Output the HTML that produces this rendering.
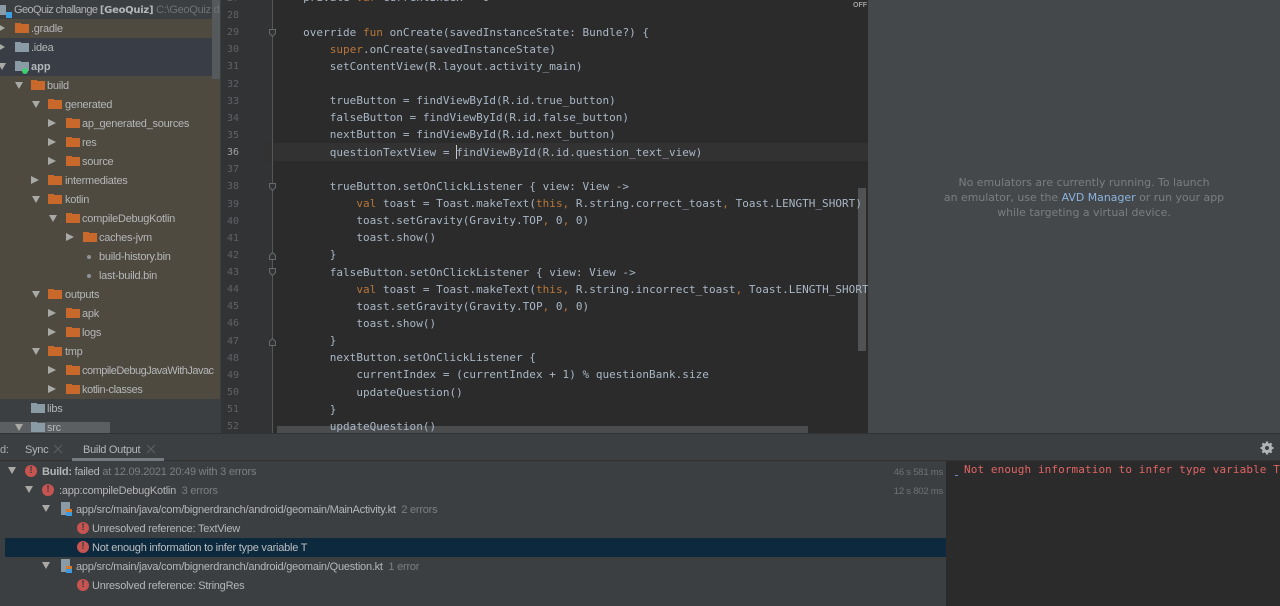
<!DOCTYPE html>
<html><head><meta charset="utf-8">
<style>
html,body{margin:0;padding:0;background:#3c3f41;}
#r{position:relative;width:1280px;height:606px;overflow:hidden;background:#3c3f41;font-family:"Liberation Sans",sans-serif;font-size:11px;letter-spacing:-.27px;color:#b4b6b8;filter:blur(.3px);}
#r div,#r span.a,#r svg{position:absolute;}
.t{white-space:nowrap;line-height:19px;height:19px;margin-top:1px;}
.bt{margin-top:2px;letter-spacing:-.23px;}
.g{color:#7c7f81;}
pre{margin:0;font-family:"DejaVu Sans Mono",monospace;letter-spacing:.03px;}
.o{color:#b8763a;}
.tri{width:0;height:0;}
.d{border-left:4px solid transparent;border-right:4px solid transparent;border-top:7px solid #a9aaa6;margin:1px 0 0 1px;}
.e{border-top:4px solid transparent;border-bottom:4px solid transparent;border-left:8px solid #a9aaa6;margin-top:1px;}
.f{width:14px;height:9px;background:#c8682a;margin-top:-1px;}
.f:before{content:"";position:absolute;left:0;top:-1px;width:6px;height:1px;background:#c8682a;}
.b:before{background:#8b9ba6;}
.b{background:#8b9ba6;}
.err{width:12px;height:12px;border-radius:50%;background:#c75450;color:#3c3f41;font:bold 10px/12px "Liberation Sans",sans-serif;text-align:center;letter-spacing:0;}
</style></head><body><div id="r">

<!-- Project tree backgrounds -->
<div style="left:0;top:0;width:220px;height:434px;background:#3c3f41"></div>
<div style="left:0;top:19px;width:220px;height:19px;background:#4f4a40"></div>
<div style="left:0;top:38px;width:220px;height:38px;background:#393e46"></div>
<div style="left:0;top:76px;width:220px;height:323px;background:#4f4a40"></div>
<div style="left:212px;top:0;width:8px;height:79px;background:#56595b"></div>
<div style="left:0;top:422px;width:110px;height:11px;background:#5c5f61"></div>

<!-- Tree rows -->
<div class="f b" style="left:0;top:7px;width:6px"></div>
<div style="left:6px;top:12px;width:6px;height:6px;background:#3aa0e0"></div>
<div class="t" style="left:14px;top:0;width:206px;overflow:hidden"><span style="color:#b0b2b4;letter-spacing:-.6px">GeoQuiz challange </span><b style="font-family:'DejaVu Sans',sans-serif;font-size:10px">[GeoQuiz]</b><span style="color:#6f7274"> C:\GeoQuiz d</span></div>

<div class="tri e" style="left:-2px;top:23px;border-left-width:7px"></div><div class="f" style="left:15px;top:25px"></div><div class="t" style="left:31px;top:19px">.gradle</div>
<div class="tri e" style="left:-2px;top:42px;border-left-width:7px"></div><div class="f b" style="left:15px;top:44px"></div><div class="t" style="left:31px;top:38px">.idea</div>
<div class="tri d" style="left:-3px;top:62px"></div><div class="f b" style="left:15px;top:63px"></div><div style="left:22px;top:68px;width:6px;height:6px;border-radius:50%;background:#3fcf70"></div><div class="t" style="left:31px;top:57px;font-weight:bold;letter-spacing:0">app</div>

<div class="tri d" style="left:14px;top:81px"></div><div class="f" style="left:31px;top:82px"></div><div class="t" style="left:47px;top:76px">build</div>
<div class="tri d" style="left:31px;top:100px"></div><div class="f" style="left:48px;top:101px"></div><div class="t" style="left:65px;top:95px">generated</div>
<div class="tri e" style="left:48px;top:118px"></div><div class="f" style="left:66px;top:120px"></div><div class="t" style="left:82px;top:114px">ap_generated_sources</div>
<div class="tri e" style="left:48px;top:137px"></div><div class="f" style="left:66px;top:139px"></div><div class="t" style="left:82px;top:133px">res</div>
<div class="tri e" style="left:48px;top:156px"></div><div class="f" style="left:66px;top:158px"></div><div class="t" style="left:82px;top:152px">source</div>
<div class="tri e" style="left:31px;top:175px"></div><div class="f" style="left:48px;top:177px"></div><div class="t" style="left:65px;top:171px">intermediates</div>
<div class="tri d" style="left:31px;top:195px"></div><div class="f" style="left:48px;top:196px"></div><div class="t" style="left:65px;top:190px">kotlin</div>
<div class="tri d" style="left:48px;top:214px"></div><div class="f" style="left:66px;top:215px"></div><div class="t" style="left:82px;top:209px">compileDebugKotlin</div>
<div class="tri e" style="left:66px;top:232px"></div><div class="f" style="left:83px;top:234px"></div><div class="t" style="left:99px;top:228px">caches-jvm</div>
<div style="left:87px;top:255px;width:4px;height:4px;border-radius:50%;background:#8f9396"></div><div class="t" style="left:99px;top:247px">build-history.bin</div>
<div style="left:87px;top:274px;width:4px;height:4px;border-radius:50%;background:#8f9396"></div><div class="t" style="left:99px;top:266px">last-build.bin</div>
<div class="tri d" style="left:31px;top:290px"></div><div class="f" style="left:48px;top:291px"></div><div class="t" style="left:65px;top:285px">outputs</div>
<div class="tri e" style="left:48px;top:308px"></div><div class="f" style="left:66px;top:310px"></div><div class="t" style="left:82px;top:304px">apk</div>
<div class="tri e" style="left:48px;top:327px"></div><div class="f" style="left:66px;top:329px"></div><div class="t" style="left:82px;top:323px">logs</div>
<div class="tri d" style="left:31px;top:347px"></div><div class="f" style="left:48px;top:348px"></div><div class="t" style="left:65px;top:342px">tmp</div>
<div class="tri e" style="left:48px;top:365px"></div><div class="f" style="left:66px;top:367px"></div><div class="t" style="left:82px;top:361px;letter-spacing:-.51px">compileDebugJavaWithJavac</div>
<div class="tri e" style="left:48px;top:384px"></div><div class="f" style="left:66px;top:386px"></div><div class="t" style="left:82px;top:380px;letter-spacing:-.4px">kotlin-classes</div>
<div class="f b" style="left:31px;top:405px"></div><div class="t" style="left:47px;top:399px">libs</div>
<div class="tri d" style="left:14px;top:423px"></div><div class="f b" style="left:31px;top:424px"></div><div class="t" style="left:47px;top:418px">src</div>

<!-- Gutter -->
<div style="left:221px;top:0;width:52px;height:434px;background:#313335;overflow:hidden">
<div style="left:44px;top:143px;width:8px;height:18px;background:#323232"></div>
<pre style="position:absolute;left:6px;top:-10.2px;font-size:10px;line-height:17.14px;color:#606366;letter-spacing:0">27
28
29
30
31
32
33
34
35
<span style="color:#a4a3a3">36</span>
37
38
39
40
41
42
43
44
45
46
47
48
49
50
51
52</pre>
</div>
<div style="left:272px;top:0;width:1px;height:434px;background:#555759"></div>

<!-- Editor -->
<div style="left:273px;top:0;width:595px;height:434px;background:#2b2b2b;overflow:hidden">
<div style="left:0;top:143px;width:595px;height:18px;background:#323232"></div>
<div style="left:4px;top:426px;width:531px;height:7px;background:#4a4c4e"></div>
<div style="left:585px;top:188px;width:8px;height:163px;background:#505254"></div>
<pre style="position:absolute;left:3.5px;top:-10.7px;font-size:11px;line-height:17.14px;color:#a9b7c6;width:591px;overflow:hidden">    private <span class="o">var</span> currentIndex = 0

    override <span class="o">fun</span> onCreate(savedInstanceState: Bundle?) {
        <span class="o">super</span>.onCreate(savedInstanceState)
        setContentView(R.layout.activity_main)

        trueButton = findViewById(R.id.true_button)
        falseButton = findViewById(R.id.false_button)
        nextButton = findViewById(R.id.next_button)
        questionTextView = findViewById(R.id.question_text_view)

        trueButton.setOnClickListener { view: View ->
            <span class="o">val</span> toast = Toast.makeText(<span class="o">this,</span> R.string.correct_toast<span class="o">,</span> Toast.LENGTH_SHORT)
            toast.setGravity(Gravity.TOP<span class="o">,</span> 0<span class="o">,</span> 0)
            toast.show()
        }
        falseButton.setOnClickListener { view: View ->
            <span class="o">val</span> toast = Toast.makeText(<span class="o">this,</span> R.string.incorrect_toast<span class="o">,</span> Toast.LENGTH_SHORT)
            toast.setGravity(Gravity.TOP<span class="o">,</span> 0<span class="o">,</span> 0)
            toast.show()
        }
        nextButton.setOnClickListener {
            currentIndex = (currentIndex + 1) % questionBank.size
            updateQuestion()
        }
        updateQuestion()</pre>
<div style="left:183px;top:145px;width:1px;height:14px;background:#c8c8c8"></div>
<div style="left:580px;top:1px;font:bold 7px/9px 'Liberation Sans',sans-serif;color:#a0a0a0;letter-spacing:0">OFF</div>
</div>
<svg style="left:267px;top:0" width="12" height="434" fill="#313335" stroke="#66696b" stroke-width="1">
<path d="M2.5 29.5h6v4l-3 3l-3-3z"/><path d="M2.5 183.5h6v4l-3 3l-3-3z"/><path d="M2.5 268.5h6v4l-3 3l-3-3z"/>
<path d="M2.5 259.5h6v-4l-3-3l-3 3z"/><path d="M2.5 345.5h6v-4l-3-3l-3 3z"/>
</svg>

<!-- Emulator panel -->
<div style="left:868px;top:0;width:412px;height:434px;background:#45484a"></div>
<div style="left:878px;top:174.5px;width:412px;text-align:center;font-family:'DejaVu Sans',sans-serif;font-size:10.93px;letter-spacing:0;line-height:15.2px;color:#7b7e80">No emulators are currently running. To launch<br>an emulator, use the <span style="color:#8ab4e0">AVD Manager</span> or run your app<br>while targeting a virtual device.</div>

<!-- Bottom panel -->
<div style="left:0;top:433px;width:1280px;height:1px;background:#323232"></div>
<div style="left:0;top:434px;width:1280px;height:26px;background:#3c3f41"></div>
<div style="left:0;top:460px;width:1280px;height:1px;background:#323232"></div>
<div class="t" style="left:0;top:440px;color:#a9abad">d:</div>
<div class="t" style="left:25px;top:440px">Sync</div>
<svg style="left:53px;top:444px" width="10" height="10" stroke="#5d6062" stroke-width="1"><path d="M1 1l8 8M9 1l-8 8"/></svg>
<div class="t" style="left:83px;top:440px">Build Output</div>
<svg style="left:146px;top:444px" width="10" height="10" stroke="#5d6062" stroke-width="1"><path d="M1 1l8 8M9 1l-8 8"/></svg>
<div style="left:72px;top:458px;width:92px;height:3px;background:#747a80"></div>
<svg style="left:1260px;top:441px" width="14" height="14" viewBox="0 0 14 14"><circle cx="7" cy="7" r="3.7" fill="none" stroke="#b0b3b5" stroke-width="3"/><path d="M7 .5v13M.5 7h13M2.4 2.4l9.2 9.2M11.6 2.4l-9.2 9.2" stroke="#b0b3b5" stroke-width="2.2"/><circle cx="7" cy="7" r="2" fill="#3c3f41"/></svg>

<div style="left:5px;top:538px;width:941px;height:19px;background:#0d293e"></div>

<div class="tri d" style="left:7px;top:466px"></div><div class="err" style="left:25px;top:465px">!</div>
<div class="t bt" style="left:42px;top:461px"><b>Build:</b> failed <span class="g">at 12.09.2021 20:49 with 3 errors</span></div>
<div class="tri d" style="left:24px;top:485px"></div><div class="err" style="left:42px;top:484px">!</div>
<div class="t bt" style="left:59px;top:480px">:app:compileDebugKotlin <span class="g">&nbsp;3 errors</span></div>
<div class="tri d" style="left:41px;top:504px"></div>
<div style="left:61px;top:502px;width:9px;height:13px;background:#8b9ba6"></div><div style="left:66px;top:509px;width:6px;height:4px;background:#d87a2a"></div><div style="left:66px;top:512px;width:6px;height:4px;background:#3a9be0"></div>
<div class="t bt" style="left:76px;top:499px">app/src/main/java/com/bignerdranch/android/geomain/MainActivity.kt <span class="g">&nbsp;2 errors</span></div>
<div class="err" style="left:77px;top:522px">!</div><div class="t bt" style="left:92px;top:518px">Unresolved reference: TextView</div>
<div class="err" style="left:77px;top:541px">!</div><div class="t bt" style="left:92px;top:537px;color:#bcbec0">Not enough information to infer type variable T</div>
<div class="tri d" style="left:41px;top:561px"></div>
<div style="left:61px;top:559px;width:9px;height:13px;background:#8b9ba6"></div><div style="left:66px;top:566px;width:6px;height:4px;background:#d87a2a"></div><div style="left:66px;top:569px;width:6px;height:4px;background:#3a9be0"></div>
<div class="t bt" style="left:76px;top:556px">app/src/main/java/com/bignerdranch/android/geomain/Question.kt <span class="g">&nbsp;1 error</span></div>
<div class="err" style="left:77px;top:579px">!</div><div class="t bt" style="left:92px;top:575px">Unresolved reference: StringRes</div>

<div class="t bt" style="right:337px;top:461px;font-size:9.5px;color:#6f7274">46 s 581 ms</div>
<div class="t bt" style="right:337px;top:480px;font-size:9.5px;color:#6f7274">12 s 802 ms</div>

<!-- Console -->
<div style="left:946px;top:461px;width:334px;height:145px;background:#2b2b2b;overflow:hidden">
<div style="left:9px;top:14px;width:3px;height:1px;background:#6a8ac0"></div>
<pre style="position:absolute;left:18px;top:0;font-size:11px;line-height:17px;color:#e06464;letter-spacing:.1px">Not enough information to infer type variable T</pre>
</div>
</div></body></html>
